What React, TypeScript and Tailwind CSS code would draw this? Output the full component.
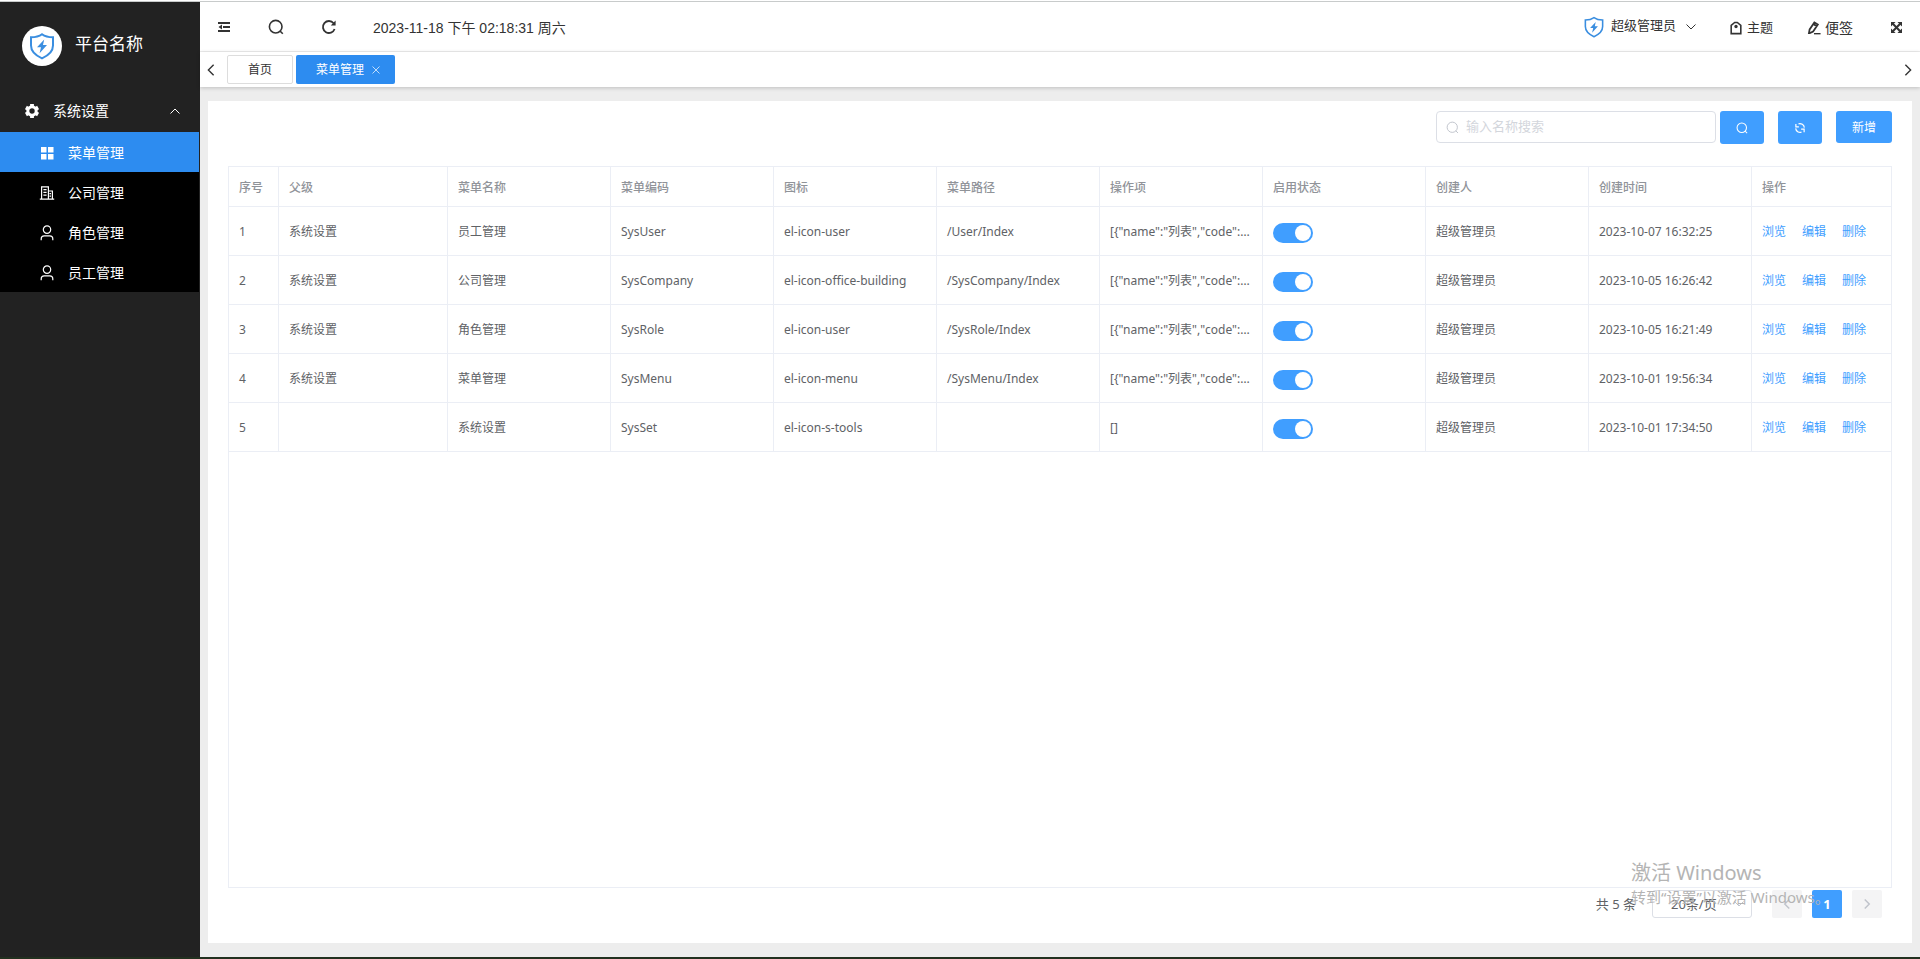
import { useState, type ReactNode } from 'react'

interface MenuRow {
  id:      number
  parent:  string
  name:    string
  code:    string
  icon:    string
  path:    string
  actions: string
  creator: string
  created: string
}

const ACTIONS = '[{"name":"列表","code":"list"},{"name":"新增","code":"add"}]'

const ROWS: MenuRow[] = [
  { id: 1, parent: '系统设置', name: '员工管理', code: 'SysUser',    icon: 'el-icon-user',            path: '/User/Index',       actions: ACTIONS, creator: '超级管理员', created: '2023-10-07 16:32:25' },
  { id: 2, parent: '系统设置', name: '公司管理', code: 'SysCompany', icon: 'el-icon-office-building', path: '/SysCompany/Index', actions: ACTIONS, creator: '超级管理员', created: '2023-10-05 16:26:42' },
  { id: 3, parent: '系统设置', name: '角色管理', code: 'SysRole',    icon: 'el-icon-user',            path: '/SysRole/Index',    actions: ACTIONS, creator: '超级管理员', created: '2023-10-05 16:21:49' },
  { id: 4, parent: '系统设置', name: '菜单管理', code: 'SysMenu',    icon: 'el-icon-menu',            path: '/SysMenu/Index',    actions: ACTIONS, creator: '超级管理员', created: '2023-10-01 19:56:34' },
  { id: 5, parent: '',         name: '系统设置', code: 'SysSet',     icon: 'el-icon-s-tools',         path: '',                  actions: '[]',    creator: '超级管理员', created: '2023-10-01 17:34:50' },
]

const COLUMNS = ['序号', '父级', '菜单名称', '菜单编码', '图标', '菜单路径', '操作项', '启用状态', '创建人', '创建时间', '操作']

// ---- icons ----

interface IconProps { className?: string }

function Svg({ className, box = 16, width = 1, children }: IconProps & { box?: number, width?: number, children: ReactNode }) {
  return (
    <svg className={className} viewBox={`0 0 ${box} ${box}`} fill="none" stroke="currentColor" strokeWidth={width} aria-hidden="true">
      {children}
    </svg>
  )
}

const ShieldIcon = ({ className }: IconProps) => (
  <Svg className={className} box={28} width={2}>
    <path d="M14 2.2C11 4.4 7 5.2 3 5.2v8.3c0 6 4.6 10 11 12.8 6.4-2.8 11-6.8 11-12.8V5.2c-4 0-8-.8-11-3z" />
    <path d="M16.2 7.5 9 15.2h4l-1.4 6L19 13h-4z" fill="currentColor" stroke="none" />
  </Svg>
)

const GearIcon = ({ className }: IconProps) => (
  <Svg className={className}>
    <circle cx="8" cy="8" r="4.2" strokeWidth="3" />
    <path d="M8 1v2.4M8 12.6V15M1.9 4.5l2 1.2M12.1 10.3l2 1.2M1.9 11.5l2-1.2M12.1 5.700l2-1.200" strokeWidth="3.800" />
  </Svg>
)

const GridIcon = ({ className }: IconProps) => (
  <Svg className={className}>
    <path d="M2 2h5.500v5.500H2zM9 2h5.500v5.500H9zM2 9h5.500v5.500H2zM9 9h5.500v5.500H9z" fill="currentColor" stroke="none" />
  </Svg>
)

const BuildingIcon = ({ className }: IconProps) => (
  <Svg className={className} width={1.2}>
    <path d="M2.600 14V1.800h6.800V14M9.400 6h4v8M.8 14.200h14.400M4.400 4.600h3.200M4.400 7.400h3.200M4.400 10.200h3.200M10.400 8.600h1.600M10.400 11.200h1.600" />
  </Svg>
)

const UserIcon = ({ className }: IconProps) => (
  <Svg className={className} width={1.2}>
    <circle cx="8" cy="4.600" r="3.700" />
    <path d="M2.200 15.200v-1.400c0-1.700 1.300-3 3-3h5.600c1.700 0 3 1.300 3 3v1.400" />
  </Svg>
)

const FoldIcon = ({ className }: IconProps) => (
  <Svg className={className} box={12} width={2}>
    <path d="M0 2h12M5 6h7M0 10h12" />
    <path d="M4 3.500v5L.5 6z" fill="currentColor" stroke="none" />
  </Svg>
)

const SearchIcon = ({ className, width = 1 }: IconProps & { width?: number }) => (
  <Svg className={className} width={width}>
    <circle cx="7.700" cy="7.700" r="6.300" />
    <path d="m12 12 2.800 2.800" />
  </Svg>
)

const ReloadIcon = ({ className }: IconProps) => (
  <Svg className={className} width={1.8}>
    <path d="M13.600 10A6 6 0 1 1 12.600 4.200" />
    <path d="M14.600 1.600v4.800H9.800z" fill="currentColor" stroke="none" />
  </Svg>
)

const SyncIcon = ({ className }: IconProps) => (
  <Svg className={className} width={1.6}>
    <path d="M2.500 2.500v4h4M13.500 13.500v-4h-4" />
    <path d="M6 2.500a6 6 0 0 1 7.800 5M10 13.500a6 6 0 0 1-7.800-5" />
  </Svg>
)

const TagIcon = ({ className }: IconProps) => (
  <Svg className={className} width={1.8}>
    <path d="M2.500 14.400V5L6.500 1.700h3l4 3.300v9.400z" />
    <circle cx="8" cy="6.300" r="1.900" fill="currentColor" stroke="none" />
  </Svg>
)

const PenIcon = ({ className }: IconProps) => (
  <Svg className={className} width={2}>
    <path d="M2.200 13.800 3 9.600l5.400-8 4 2.500-5.400 8-3.800 1.700zM7.600 3.600l3.600 2.300" />
    <path d="M8 14.500h7.500" strokeWidth="1.600" />
  </Svg>
)

const ExpandIcon = ({ className }: IconProps) => (
  <Svg className={className} box={12} width={2.2}>
    <path d="m2 2 8 8M10 2l-8 8" />
    <path d="M0 0h5L0 5zM12 0v5L7 0zM0 12V7l5 5zM12 12H7l5-5z" fill="currentColor" stroke="none" />
  </Svg>
)

const CloseIcon = ({ className }: IconProps) => (
  <Svg className={className} box={8}><path d="m.5.500 7 7M7.500.500l-7 7" /></Svg>
)

const LeftIcon = ({ className, width = 1.5 }: IconProps & { width?: number }) => (
  <Svg className={className} width={width}><path d="M11 2 5 8l6 6" /></Svg>
)

const RightIcon = ({ className, width = 1.5 }: IconProps & { width?: number }) => (
  <Svg className={className} width={width}><path d="m5 2 6 6-6 6" /></Svg>
)

const DownIcon = ({ className }: IconProps) => (
  <Svg className={className} box={12}><path d="m1.500 3.500 4.500 4.500 4.500-4.500" /></Svg>
)

const UpIcon = ({ className }: IconProps) => (
  <Svg className={className} box={12}><path d="M1.500 8.500 6 4l4.500 4.500" /></Svg>
)

// ---- sidebar ----

const SIDE_ITEMS = [
  { label: '菜单管理', Icon: GridIcon },
  { label: '公司管理', Icon: BuildingIcon },
  { label: '角色管理', Icon: UserIcon },
  { label: '员工管理', Icon: UserIcon },
]

function Sidebar() {
  const [open,   setOpen]   = useState(true)
  const [active, setActive] = useState('菜单管理')

  return (
    <aside className="w-[200px] shrink-0 bg-[#222] text-white">
      <div className="flex items-center gap-[13px] pl-[22px] pt-6">
        <span className="flex size-10 items-center justify-center rounded-full bg-white text-[#3a8ee0]">
          <ShieldIcon className="size-7" />
        </span>
        <h1 className="pb-0.5 text-[17px] leading-6">平台名称</h1>
      </div>
      <nav className="mt-6 pr-px">
        <button onClick={() => setOpen(!open)} className="flex h-[42px] w-full items-center pl-6 pr-[18px] text-sm">
          <GearIcon className="size-4" />
          <span className="ml-[13px]">系统设置</span>
          <UpIcon className="ml-auto size-3" />
        </button>
        {open && (
          <ul className="bg-black">
            {SIDE_ITEMS.map(({ label, Icon }) => (
              <li key={label}>
                <a
                  href="#"
                  onClick={() => setActive(label)}
                  className={`flex h-10 items-center gap-[13px] pl-[39px] pt-px text-sm ${active === label ? 'bg-[#2d8cf0]' : ''}`}
                >
                  <Icon className="size-4" />
                  {label}
                </a>
              </li>
            ))}
          </ul>
        )}
      </nav>
    </aside>
  )
}

// ---- top bars ----

function TopBar() {
  return (
    <header className="flex h-[50px] items-center border-b border-[#eee] pl-[18px] pr-[18px] text-[#333]">
      <button aria-label="收起菜单"><FoldIcon className="size-3" /></button>
      <button aria-label="搜索" className="ml-[38px]"><SearchIcon className="size-4" width={1.6} /></button>
      <button aria-label="刷新" className="ml-[37px]"><ReloadIcon className="size-4" /></button>
      <time className="ml-9 pt-0.5 text-sm">2023-11-18 下午 02:18:31 周六</time>
      <button className="ml-auto flex items-center text-[13px]">
        <ShieldIcon className="size-[22px] text-[#3a8ee0]" />
        <span className="ml-1.5 pb-0.5">超级管理员</span>
        <DownIcon className="ml-[9px] size-3" />
      </button>
      <button className="ml-8 flex items-center gap-1 pt-0.5 text-[13px]">
        <TagIcon className="size-3.5" />主题
      </button>
      <button className="ml-[34px] flex items-center gap-1 pt-0.5 text-sm">
        <PenIcon className="size-3.5" />便签
      </button>
      <button aria-label="全屏" className="ml-[38px] pt-0.5"><ExpandIcon className="size-[11px]" /></button>
    </header>
  )
}

function TabsBar() {
  return (
    <div className="relative flex h-[35px] items-center pl-1 pr-[5px] text-xs text-[#333] shadow-[0_1px_4px_rgba(0,0,0,0.2)]">
      <button aria-label="向左"><LeftIcon className="size-3.5" width={1.6} /></button>
      <button className="ml-[9px] h-[29px] rounded-xs border border-[#ddd] px-5">首页</button>
      <div className="ml-[3px] flex h-[29px] items-center rounded-xs bg-[#2d8cf0] pl-5 pr-[15px] text-white">
        <button>菜单管理</button>
        <button aria-label="关闭" className="ml-2"><CloseIcon className="size-2 opacity-70" /></button>
      </div>
      <button aria-label="向右" className="ml-auto"><RightIcon className="size-3.5" width={1.6} /></button>
    </div>
  )
}

// ---- content ----

function Toolbar() {
  const [keyword, setKeyword] = useState('')
  return (
    <div className="flex items-start justify-end pb-[22px]">
      <label className="flex h-8 w-[280px] items-center gap-[7px] rounded border border-[#dcdfe6] pl-[9px] text-[#c0c4cc]">
        <SearchIcon className="size-[13px]" width={1.2} />
        <input
          type="text" value={keyword}
          onChange={e => setKeyword(e.target.value)}
          aria-label="名称"
          placeholder="输入名称搜索"
          className="min-w-0 flex-1 text-[13px] text-[#606266] outline-none placeholder:text-[#d3d6dc]"
        />
      </label>
      <button aria-label="搜索" className="ml-1 flex h-[33px] w-11 items-center justify-center rounded-[3px] bg-[#409eff] text-white">
        <SearchIcon className="size-3" width={1.4} />
      </button>
      <button aria-label="重置" className="ml-3.5 flex h-[33px] w-11 items-center justify-center rounded-[3px] bg-[#409eff] text-white">
        <SyncIcon className="size-3" />
      </button>
      <button className="ml-3.5 h-8 w-14 rounded-[3px] bg-[#409eff] pt-px text-xs text-white">新增</button>
    </div>
  )
}

function MenuTable() {
  const [enabled, setEnabled] = useState<number[]>(ROWS.map(r => r.id))

  const toggle = (id: number) =>
    setEnabled(prev => prev.includes(id) ? prev.filter(x => x !== id) : [...prev, id])

  const cell = 'truncate border-b border-r border-[#ebeef5] px-2.5 pt-0.5'

  return (
    <div className="flex-1 border border-[#ebeef5]">
      <table className="w-full table-fixed border-separate border-spacing-0 text-xs text-[#606266]">
        <colgroup>
          <col className="w-[50px]" />
          <col className="w-[169px]" />
          {COLUMNS.slice(2, -1).map(c => <col key={c} />)}
          <col className="w-[139px]" />
        </colgroup>
        <thead>
          <tr className="h-10 text-left text-[#909399]">
            {COLUMNS.map(c => (
              <th key={c} className={`${cell} font-medium last:border-r-0`}>{c}</th>
            ))}
          </tr>
        </thead>
        <tbody>
          {ROWS.map(row => (
            <tr key={row.id} className="h-[49px]">
              <td className={cell}>{row.id}</td>
              <td className={cell}>{row.parent}</td>
              <td className={cell}>{row.name}</td>
              <td className={cell}>{row.code}</td>
              <td className={cell}>{row.icon}</td>
              <td className={cell}>{row.path}</td>
              <td className={cell}>{row.actions}</td>
              <td className={cell}>
                <input
                  type="checkbox" role="switch" aria-label={`启用${row.name}`}
                  checked={enabled.includes(row.id)}
                  onChange={() => toggle(row.id)}
                  className="mt-0.5 flex h-5 w-10 appearance-none items-center rounded-full bg-[#dcdfe6] px-0.5 before:size-4 before:rounded-full before:bg-white checked:justify-end checked:bg-[#409eff]"
                />
              </td>
              <td className={cell}>{row.creator}</td>
              <td className={cell}>{row.created}</td>
              <td className={`${cell} border-r-0`}>
                <div className="flex gap-4 text-[#409eff]">
                  <button>浏览</button>
                  <button>编辑</button>
                  <button>删除</button>
                </div>
              </td>
            </tr>
          ))}
        </tbody>
      </table>
    </div>
  )
}

function Pagination() {
  return (
    <div className="flex items-center justify-end pb-[25px] pr-2.5 pt-0.5 text-[13px] text-[#606266]">
      <span className="pt-0.5">共 5 条</span>
      <label className="ml-4 flex h-7 w-[100px] items-center rounded-[3px] border border-[#dcdfe6]">
        <select aria-label="每页条数" className="min-w-0 flex-1 appearance-none pl-[18px] pt-0.5 outline-none">
          <option>20条/页</option>
        </select>
        <DownIcon className="mr-1.5 size-3 text-[#c0c4cc]" />
      </label>
      <button aria-label="上一页" disabled className="ml-5 flex h-7 w-[30px] items-center justify-center rounded-xs bg-[#f4f4f5] text-[#c0c4cc]">
        <LeftIcon className="size-3" width={2} />
      </button>
      <button className="ml-2.5 h-7 w-[30px] rounded-xs bg-[#409eff] pt-0.5 font-bold text-white">1</button>
      <button aria-label="下一页" disabled className="ml-2.5 flex h-7 w-[30px] items-center justify-center rounded-xs bg-[#f4f4f5] text-[#c0c4cc]">
        <RightIcon className="size-3" width={2} />
      </button>
    </div>
  )
}

export default function App() {
  return (
    <div className="flex min-h-screen flex-col bg-white font-['Liberation_Sans','Noto_Sans_CJK_SC',sans-serif]">
      <div className="h-0.5 border-b border-[#c8cbcb]" />
      <div className="flex flex-1">
        <Sidebar />
        <div className="flex min-w-0 flex-1 flex-col">
          <TopBar />
          <TabsBar />
          <main className="flex flex-1 flex-col bg-[#ededed] px-2 pb-3.5 pt-3.5 font-['Noto_Sans','Noto_Sans_CJK_SC',sans-serif]">
            <section className="relative flex flex-1 flex-col bg-white px-5 pt-2.5">
              <Toolbar />
              <MenuTable />
              <Pagination />
              {/* system activation notice floats above the page */}
              <div className="pointer-events-none absolute bottom-9 right-[74px] w-[207px] whitespace-nowrap text-[#b4b4b4]">
                <p className="text-xl leading-7">激活 Windows</p>
                <p className="text-[15px] leading-5">转到“设置”以激活 Windows。</p>
              </div>
            </section>
          </main>
        </div>
      </div>
      <div className="h-0.5 bg-[#22301f]" />
    </div>
  )
}
